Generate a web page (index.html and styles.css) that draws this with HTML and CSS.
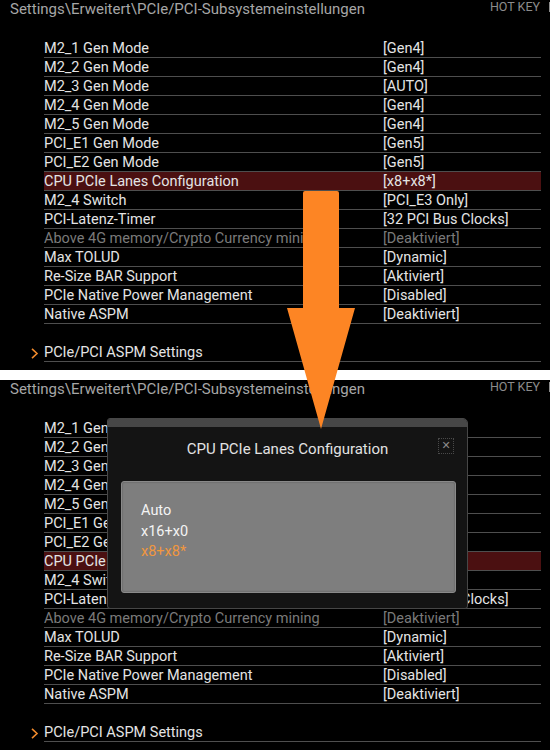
FILE: index.html
```html
<!DOCTYPE html>
<html lang="de">
<head>
<meta charset="utf-8">
<title>PCIe/PCI-Subsystemeinstellungen</title>
<link rel="stylesheet" href="styles.css">
</head>
<body>
<div class="page">
  <section class="panel">
    <header class="topbar">
      <span class="crumb">Settings\Erweitert\PCIe/PCI-Subsystemeinstellungen</span>
      <span class="hotkey">HOT KEY<span class="bar"></span></span>
    </header>
    <div class="list">
      <div class="row"><span class="label">M2_1 Gen Mode</span><span class="value">[Gen4]</span></div>
      <div class="row"><span class="label">M2_2 Gen Mode</span><span class="value">[Gen4]</span></div>
      <div class="row"><span class="label">M2_3 Gen Mode</span><span class="value">[AUTO]</span></div>
      <div class="row"><span class="label">M2_4 Gen Mode</span><span class="value">[Gen4]</span></div>
      <div class="row"><span class="label">M2_5 Gen Mode</span><span class="value">[Gen4]</span></div>
      <div class="row"><span class="label">PCI_E1 Gen Mode</span><span class="value">[Gen5]</span></div>
      <div class="row"><span class="label">PCI_E2 Gen Mode</span><span class="value">[Gen5]</span></div>
      <div class="row selected"><span class="label">CPU PCIe Lanes Configuration</span><span class="value">[x8+x8*]</span></div>
      <div class="row"><span class="label">M2_4 Switch</span><span class="value">[PCI_E3 Only]</span></div>
      <div class="row"><span class="label">PCI-Latenz-Timer</span><span class="value">[32 PCI Bus Clocks]</span></div>
      <div class="row disabled"><span class="label">Above 4G memory/Crypto Currency mining</span><span class="value">[Deaktiviert]</span></div>
      <div class="row"><span class="label">Max TOLUD</span><span class="value">[Dynamic]</span></div>
      <div class="row"><span class="label">Re-Size BAR Support</span><span class="value">[Aktiviert]</span></div>
      <div class="row"><span class="label">PCIe Native Power Management</span><span class="value">[Disabled]</span></div>
      <div class="row"><span class="label">Native ASPM</span><span class="value">[Deaktiviert]</span></div>
      <div class="sub">
        <span class="chev"><svg width="8" height="11" viewBox="0 0 8 11"><polyline points="1,0.8 6,5.5 1,10.2" fill="none" stroke="#f08a2c" stroke-width="1.6"/></svg></span>
        <span class="sub-label">PCIe/PCI ASPM Settings</span>
      </div>
    </div>
  </section>

  <div class="band"></div>

  <section class="panel panel-popup">
    <header class="topbar">
      <span class="crumb">Settings\Erweitert\PCIe/PCI-Subsystemeinstellungen</span>
      <span class="hotkey">HOT KEY<span class="bar"></span></span>
    </header>
    <div class="list">
      <div class="row"><span class="label">M2_1 Gen Mode</span><span class="value">[Gen4]</span></div>
      <div class="row"><span class="label">M2_2 Gen Mode</span><span class="value">[Gen4]</span></div>
      <div class="row"><span class="label">M2_3 Gen Mode</span><span class="value">[AUTO]</span></div>
      <div class="row"><span class="label">M2_4 Gen Mode</span><span class="value">[Gen4]</span></div>
      <div class="row"><span class="label">M2_5 Gen Mode</span><span class="value">[Gen4]</span></div>
      <div class="row"><span class="label">PCI_E1 Gen Mode</span><span class="value">[Gen5]</span></div>
      <div class="row"><span class="label">PCI_E2 Gen Mode</span><span class="value">[Gen5]</span></div>
      <div class="row selected"><span class="label">CPU PCIe Lanes Configuration</span><span class="value">[x8+x8*]</span></div>
      <div class="row"><span class="label">M2_4 Switch</span><span class="value">[PCI_E3 Only]</span></div>
      <div class="row"><span class="label">PCI-Latenz-Timer</span><span class="value">[32 PCI Bus Clocks]</span></div>
      <div class="row disabled"><span class="label">Above 4G memory/Crypto Currency mining</span><span class="value">[Deaktiviert]</span></div>
      <div class="row"><span class="label">Max TOLUD</span><span class="value">[Dynamic]</span></div>
      <div class="row"><span class="label">Re-Size BAR Support</span><span class="value">[Aktiviert]</span></div>
      <div class="row"><span class="label">PCIe Native Power Management</span><span class="value">[Disabled]</span></div>
      <div class="row"><span class="label">Native ASPM</span><span class="value">[Deaktiviert]</span></div>
      <div class="sub">
        <span class="chev"><svg width="8" height="11" viewBox="0 0 8 11"><polyline points="1,0.8 6,5.5 1,10.2" fill="none" stroke="#f08a2c" stroke-width="1.6"/></svg></span>
        <span class="sub-label">PCIe/PCI ASPM Settings</span>
      </div>
    </div>

    <div class="dialog">
      <div class="dialog-strip"></div>
      <div class="dialog-head">
        <span class="dialog-title">CPU PCIe Lanes Configuration</span>
        <span class="close">&#x2715;</span>
      </div>
      <div class="options">
        <div class="option">Auto</div>
        <div class="option">x16+x0</div>
        <div class="option current">x8+x8*</div>
      </div>
    </div>
  </section>

  <svg class="arrow" width="550" height="750" viewBox="0 0 550 750">
    <path d="M305,191 L337,191 Q339,191 339,193 L339,308 L355,308 L321,429 L287,308 L303,308 L303,193 Q303,191 305,191 Z" fill="#fd8524"/>
  </svg>
</div>
</body>
</html>
```

FILE: styles.css
```css
* { box-sizing: border-box; }

html, body {
  margin: 0;
  padding: 0;
  background: #000;
}

.page {
  position: relative;
  width: 550px;
  height: 750px;
  overflow: hidden;
  font-family: Roboto, "Liberation Sans", sans-serif;
  font-size: 14.5px;
  color: #e4e4e4;
}

.panel {
  position: relative;
  height: 370px;
  overflow: hidden;
  background: #000;
}

.band {
  height: 10px;
  background: #fff;
}

.topbar {
  display: flex;
  justify-content: space-between;
  align-items: flex-start;
  height: 19px;
  padding-left: 10px;
}

.crumb {
  font-size: 15px;
  line-height: 19px;
  color: #a6a6a6;
}

.hotkey {
  display: flex;
  align-items: flex-start;
  font-size: 12.5px;
  line-height: 13px;
  color: #8c8c8c;
  white-space: nowrap;
  margin-right: -1px;
}

.hotkey .bar {
  width: 2px;
  height: 10px;
  margin: 2px 0 0 9px;
  background: #8c8c8c;
}

.list {
  margin: 20px 0 0 44px;
  width: 497px;
}

.row {
  display: flex;
  align-items: center;
  height: 19px;
  padding-top: 1px;
  border-bottom: 1px solid #4e4e4e;
  line-height: 17px;
  white-space: nowrap;
}

.label {
  width: 339px;
  overflow: hidden;
}

.value {
  flex: 1;
}

.selected {
  background: #4b1011;
}

.disabled {
  color: #7a7a7a;
}

.sub {
  display: flex;
  align-items: center;
  margin: 19px 0 0 -13px;
  height: 19px;
}

.chev {
  width: 13px;
  display: flex;
  align-items: center;
  padding-top: 1px;
}

.sub-label {
  flex: 1;
  height: 19px;
  padding-top: 1px;
  line-height: 17px;
  border-bottom: 1px solid #4e4e4e;
}

/* dialog */
.dialog {
  position: absolute;
  left: 107px;
  top: 38px;
  width: 361px;
  height: 191px;
  background: #141414;
  border: 1px solid #474747;
  border-radius: 3px 5px 3px 3px;
  display: flex;
  flex-direction: column;
}

.dialog-strip {
  height: 8px;
  border-radius: 2px 4px 0 0;
  background-color: #1e1e1e;
  background-image: radial-gradient(circle, #4a4a4a 0.7px, transparent 0.8px);
  background-size: 2px 2px;
}

.dialog-head {
  position: relative;
  height: 54px;
  display: flex;
  justify-content: center;
  padding-top: 12px;
}

.dialog-title {
  font-size: 15px;
  line-height: 20px;
  color: #e2e2e2;
}

.close {
  position: absolute;
  right: 13px;
  top: 11px;
  width: 16px;
  height: 16px;
  border: 1px dotted #4a4a4a;
  color: #8a8a8a;
  font-size: 11px;
  line-height: 14px;
  text-align: center;
  font-family: "DejaVu Sans", sans-serif;
}

.options {
  margin: 0 11px 15px 13px;
  flex: 1;
  background: #7e7e7e;
  border: 1px solid #8a8a8a;
  border-radius: 3px;
  box-shadow: inset 0 0 2px rgba(0,0,0,0.35);
  padding: 19px 0 0 19px;
}

.option {
  height: 20.5px;
  line-height: 20px;
  font-size: 14.5px;
  color: #f4f4f4;
}

.option.current {
  color: #f0973e;
}

.arrow {
  position: absolute;
  left: 0;
  top: 0;
  pointer-events: none;
}
```
